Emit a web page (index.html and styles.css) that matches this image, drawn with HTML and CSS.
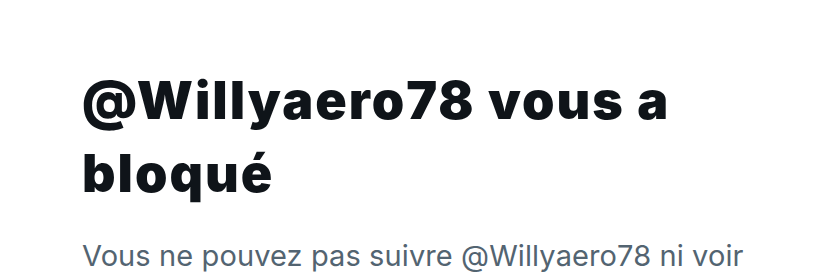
FILE: index.html
```html
<!DOCTYPE html>
<html lang="fr">
<head>
    <meta charset="UTF-8">
    <meta name="viewport" content="width=device-width, initial-scale=1.0">
    <title>Compte bloqué</title>
    <link rel="stylesheet" href="styles.css">
</head>
<body>
    <div class="blocked">
        <h1 class="blocked-title">@Willyaero78 vous a bloqué</h1>
        <p class="blocked-text">Vous ne pouvez pas suivre @Willyaero78 ni voir ses posts.</p>
    </div>
</body>
</html>
```

FILE: styles.css
```css
body {
    margin: 0;
    background-color: #ffffff;
    font-family: Inter, "Noto Sans", sans-serif;
    overflow: hidden;
}
.blocked {
    width: 700px;
    padding: 64px 0 0 82px;
}
.blocked-title {
    margin: 0;
    font-size: 52px;
    line-height: 73px;
    font-weight: 900;
    letter-spacing: 2px;
    color: #0f1419;
}
.blocked-text {
    margin: 28px 0 0;
    font-size: 29px;
    line-height: 36px;
    letter-spacing: 0.1px;
    color: #536471;
}
```
